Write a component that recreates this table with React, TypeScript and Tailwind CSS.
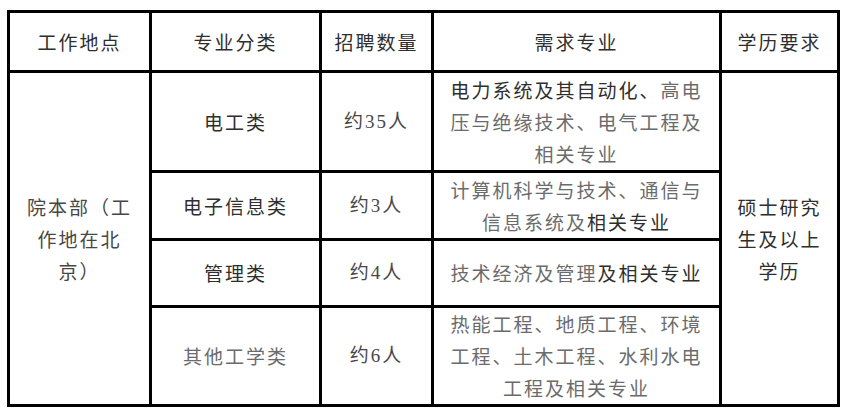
const dark = "text-[#2e2e2e]";
const mid = "text-[#474747]";
const light = "text-[#6b6b6b]";

export default function App() {
  return (
    <div className="min-h-[411px] w-[852px] bg-white pl-[7px] pt-[10px] font-['Noto_Sans_CJK_SC',sans-serif] text-[19px] leading-[32px] tracking-[2px]">
      <table className="table-fixed border-collapse border-[3px] border-black text-center">
        <colgroup>
          <col className="w-[142px]" />
          <col className="w-[170px]" />
          <col className="w-[112px]" />
          <col className="w-[288px]" />
          <col className="w-[118px]" />
        </colgroup>
        <tbody>
          <tr className="h-[60px]">
            <td className={`border-[3px] border-black px-2 ${dark}`}>工作地点</td>
            <td className={`border-[3px] border-black px-2 ${dark}`}>专业分类</td>
            <td className={`border-[3px] border-black px-2 ${dark}`}>招聘数量</td>
            <td className={`border-[3px] border-black px-2 ${dark}`}>需求专业</td>
            <td className={`border-[3px] border-black px-2 ${dark}`}>学历要求</td>
          </tr>
          <tr className="h-[100px]">
            <td rowSpan={4} className={`border-[3px] border-black px-3 ${mid}`}>
              院本部（工作地在北京）
            </td>
            <td className={`border-[3px] border-black px-2 ${dark}`}>电工类</td>
            <td className={`border-[3px] border-black px-2 font-['Liberation_Serif','Noto_Sans_CJK_SC',serif] ${mid}`}>
              约35人
            </td>
            <td className="border-[3px] border-black px-2">
              <span className={dark}>电力系统及其自动化、</span>
              <span className={light}>高电压与绝缘技术、电气工程及相关专业</span>
            </td>
            <td rowSpan={4} className={`border-[3px] border-black px-2 ${dark}`}>
              硕士研究生及以上学历
            </td>
          </tr>
          <tr className="h-[68px]">
            <td className={`border-[3px] border-black px-2 ${dark}`}>电子信息类</td>
            <td className={`border-[3px] border-black px-2 font-['Liberation_Serif','Noto_Sans_CJK_SC',serif] ${mid}`}>
              约3人
            </td>
            <td className="border-[3px] border-black px-2">
              <span className={light}>计算机科学与技术、通信与信息系统及</span>
              <span className={dark}>相关专业</span>
            </td>
          </tr>
          <tr className="h-[67px]">
            <td className={`border-[3px] border-black px-2 ${dark}`}>管理类</td>
            <td className={`border-[3px] border-black px-2 font-['Liberation_Serif','Noto_Sans_CJK_SC',serif] ${mid}`}>
              约4人
            </td>
            <td className="border-[3px] border-black px-2">
              <span className={light}>技术经济及管理</span>
              <span className={dark}>及相关专业</span>
            </td>
          </tr>
          <tr className="h-[98px]">
            <td className={`border-[3px] border-black px-2 ${light}`}>其他工学类</td>
            <td className={`border-[3px] border-black px-2 font-['Liberation_Serif','Noto_Sans_CJK_SC',serif] ${mid}`}>
              约6人
            </td>
            <td className={`border-[3px] border-black px-2 ${light}`}>
              热能工程、地质工程、环境工程、土木工程、水利水电工程及相关专业
            </td>
          </tr>
        </tbody>
      </table>
    </div>
  );
}
